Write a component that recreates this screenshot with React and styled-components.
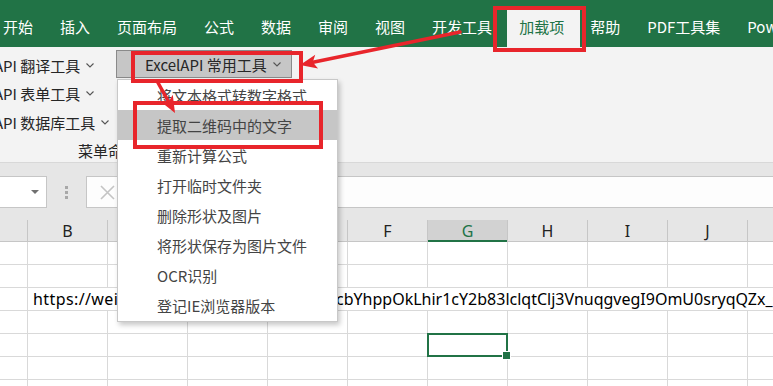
import React from "react";
import styled, { createGlobalStyle } from "styled-components";

const Global = createGlobalStyle`
  html, body { margin: 0; padding: 0; background: #fff; }
  * { box-sizing: border-box; }
`;

const CJK = `"Noto Sans CJK SC", "Noto Sans", sans-serif`;
const LATIN = `"Noto Sans", "Noto Sans CJK SC", sans-serif`;
const GREEN = "#217346";
const RED = "#e8252b";

const Screen = styled.div`
  position: relative;
  width: 773px;
  height: 386px;
  overflow: hidden;
  background: #fff;
  font-family: ${CJK};
`;

const TabBar = styled.div`
  display: flex;
  height: 47px;
  padding-top: 10px;
  margin-left: -10.5px;
  background: ${GREEN};
  white-space: nowrap;
`;

const Tab = styled.div`
  flex: none;
  display: flex;
  align-items: center;
  height: 37px;
  padding: 0 ${(p) => (p.$active ? "16px" : "13.5px")} 5px
    ${(p) => (p.$active ? "12px" : "13.5px")};
  margin-left: ${(p) => (p.$active ? "1.5px" : "0")};
  margin-right: ${(p) => (p.$active ? "-3.5px" : "0")};
  font-size: 15px;
  line-height: 1;
  color: ${(p) => (p.$active ? GREEN : "#fff")};
  background: ${(p) => (p.$active ? "#f3f3f3" : "transparent")};
`;

const Ribbon = styled.div`
  display: flex;
  flex-direction: column;
  height: 116px;
  background: #f3f3f3;
  border-bottom: 1px solid #d4d4d4;
`;

const RibbonRow = styled.div`
  flex: 1;
  display: flex;
`;

const LeftGroup = styled.div`
  width: 116px;
  flex: none;
  display: flex;
  flex-direction: column;
  padding-top: 4px;
`;

const RibbonLabel = styled.div`
  display: flex;
  align-items: center;
  gap: 6px;
  height: 28.5px;
  margin-left: -6px;
  font-size: 15px;
  color: #262626;
  white-space: nowrap;
`;

const ToolGroup = styled.div`
  position: relative;
  padding-top: 3px;
`;

const DropButton = styled.div`
  display: flex;
  align-items: center;
  gap: 6px;
  width: 176px;
  height: 28px;
  padding-left: 28px;
  background: #c6c6c6;
  border: 1px solid #8a8a8a;
  font-size: 15px;
  color: #262626;
  white-space: nowrap;
`;

const Menu = styled.div`
  position: absolute;
  z-index: 10;
  top: 32px;
  left: 1px;
  width: 221px;
  padding-bottom: 1px;
  background: #fff;
  border: 1px solid #c8c8c8;
  box-shadow: 2px 3px 5px rgba(0, 0, 0, 0.22);
`;

const MenuItem = styled.div`
  display: flex;
  align-items: center;
  height: 30px;
  padding-left: 39px;
  font-size: 15px;
  color: #444;
  white-space: nowrap;
  background: ${(p) => (p.$hover ? "#c6c6c6" : "transparent")};
`;

const Caption = styled.div`
  height: 23px;
  line-height: 23px;
  padding-left: 78px;
  font-size: 15px;
  color: #262626;
  white-space: nowrap;
`;

const FormulaArea = styled.div`
  padding: 13px 0 12px;
  background: #e6e6e6;
  border-top: 1px solid #d8d8d8;
  margin-top: -1px;
`;

const FormulaRow = styled.div`
  display: flex;
  height: 32px;
`;

const NameBox = styled.div`
  width: 47px;
  display: flex;
  align-items: center;
  justify-content: flex-end;
  padding-right: 7px;
  background: #fff;
  border: 1px solid #c6c6c6;
  border-left: none;
`;

const Caret = styled.span`
  width: 0;
  height: 0;
  border-left: 4px solid transparent;
  border-right: 4px solid transparent;
  border-top: 4px solid #707070;
`;

const Dots = styled.div`
  width: 39px;
  display: flex;
  flex-direction: column;
  align-items: center;
  justify-content: center;
  gap: 2px;
`;

const Dot = styled.span`
  width: 3px;
  height: 3px;
  background: #a8a8a8;
`;

const FxBox = styled.div`
  flex: 1;
  display: flex;
  align-items: center;
  padding-left: 13px;
  background: #fdfdfd;
  border: 1px solid #c6c6c6;
  border-right: none;
`;

const COLS = "28px repeat(10, 80px)";

const HeaderRow = styled.div`
  display: grid;
  grid-template-columns: ${COLS};
  height: 22px;
  background: #e6e6e6;
  border-bottom: 1px solid #c6c6c6;
`;

const HeaderCell = styled.div`
  display: flex;
  align-items: center;
  justify-content: center;
  border-right: 1px solid #c6c6c6;
  font-family: ${LATIN};
  font-size: 16px;
  line-height: 1;
  color: ${(p) => (p.$sel ? GREEN : "#222")};
  background: ${(p) => (p.$sel ? "#d2d2d2" : "transparent")};
  box-shadow: ${(p) => (p.$sel ? `inset 0 -2px 0 ${GREEN}` : "none")};
  margin-bottom: ${(p) => (p.$sel ? "-1px" : "0")};
`;

const Row = styled.div`
  display: grid;
  grid-template-columns: ${COLS};
  height: 23px;
`;

const Cell = styled.div`
  position: relative;
  border-right: 1px solid #d9d9d9;
  border-bottom: 1px solid #d9d9d9;

  ${(p) =>
    p.$sel &&
    `
    &::after {
      content: "";
      position: absolute;
      z-index: 1;
      top: -1px; left: -1px; right: -1px; bottom: -1px;
      border: 2px solid ${GREEN};
    }
    &::before {
      content: "";
      position: absolute;
      z-index: 2;
      right: -4px; bottom: -4px;
      width: 7px; height: 7px;
      background: ${GREEN};
      border: 1px solid #fff;
    }
  `}
`;

const TextCell = styled.div`
  grid-column: 2 / -1;
  border-bottom: 1px solid #d9d9d9;
  padding-left: 5px;
  overflow: hidden;
  white-space: nowrap;
  font-family: ${LATIN};
  font-size: 16px;
  line-height: 22px;
  color: #000;
`;

const Covered = styled.span`
  display: inline-block;
  width: 303px;
  overflow: hidden;
  vertical-align: top;
  letter-spacing: 0.4px;
`;

const RedBox = styled.div`
  position: absolute;
  z-index: 20;
  left: ${(p) => p.$x}px;
  top: ${(p) => p.$y}px;
  width: ${(p) => p.$w}px;
  height: ${(p) => p.$h}px;
  border: 4px solid ${RED};
  pointer-events: none;
`;

const ArrowLayer = styled.svg`
  position: absolute;
  z-index: 21;
  left: 0;
  top: 0;
  pointer-events: none;
`;

const Chevron = () => (
  <svg width="8" height="5" viewBox="0 0 8 5">
    <polyline points="0.5,0.5 4,4 7.5,0.5" fill="none" stroke="#555" strokeWidth="1.1" />
  </svg>
);

const Arrow = ({ x1, y1, x2, y2 }) => {
  const dx = x2 - x1;
  const dy = y2 - y1;
  const len = Math.hypot(dx, dy);
  const ux = dx / len;
  const uy = dy / len;
  const hl = 17;
  const hw = 7;
  const bx = x2 - ux * hl;
  const by = y2 - uy * hl;
  const pts = `${x2},${y2} ${bx - uy * hw},${by + ux * hw} ${bx + ux * 4},${by + uy * 4} ${bx + uy * hw},${by - ux * hw}`;
  return (
    <g>
      <line x1={x1} y1={y1} x2={bx + ux * 5} y2={by + uy * 5} stroke={RED} strokeWidth="3.5" strokeLinecap="round" />
      <polygon points={pts} fill={RED} />
    </g>
  );
};

const tabs = ["开始", "插入", "页面布局", "公式", "数据", "审阅", "视图", "开发工具", "加载项", "帮助", "PDF工具集", "Power Pivot"];
const menuItems = [
  "将文本格式转数字格式",
  "提取二维码中的文字",
  "重新计算公式",
  "打开临时文件夹",
  "删除形状及图片",
  "将形状保存为图片文件",
  "OCR识别",
  "登记IE浏览器版本",
];
const letters = ["", "B", "C", "D", "E", "F", "G", "H", "I", "J", "K"];

export default function App() {
  return (
    <Screen>
      <Global />
      <TabBar>
        {tabs.map((t) => (
          <Tab key={t} $active={t === "加载项"}>
            {t}
          </Tab>
        ))}
      </TabBar>

      <Ribbon>
        <RibbonRow>
          <LeftGroup>
            <RibbonLabel>
              API 翻译工具 <Chevron />
            </RibbonLabel>
            <RibbonLabel>
              API 表单工具 <Chevron />
            </RibbonLabel>
            <RibbonLabel>
              API 数据库工具 <Chevron />
            </RibbonLabel>
          </LeftGroup>
          <ToolGroup>
            <DropButton>
              ExcelAPI 常用工具 <Chevron />
            </DropButton>
            <Menu>
              {menuItems.map((m, i) => (
                <MenuItem key={m} $hover={i === 1}>
                  {m}
                </MenuItem>
              ))}
            </Menu>
          </ToolGroup>
        </RibbonRow>
        <Caption>菜单命令</Caption>
      </Ribbon>

      <FormulaArea>
        <FormulaRow>
          <NameBox>
            <Caret />
          </NameBox>
          <Dots>
            <Dot />
            <Dot />
            <Dot />
          </Dots>
          <FxBox>
            <svg width="15" height="15" viewBox="0 0 15 15">
              <path d="M1 1 L14 14 M14 1 L1 14" stroke="#c4c4c4" strokeWidth="1.6" />
            </svg>
          </FxBox>
        </FormulaRow>
      </FormulaArea>

      <HeaderRow>
        {letters.map((l, i) => (
          <HeaderCell key={i} $sel={l === "G"}>
            {l}
          </HeaderCell>
        ))}
      </HeaderRow>
      {[0, 1, 2, 3, 4, 5, 6].map((r) =>
        r === 2 ? (
          <Row key={r}>
            <Cell />
            <TextCell>
              <Covered>https://weixin.qq.com/r/mp/zxHjvGaE-Lkz8rNw</Covered>
              cbYhppOkLhir1cY2b83lclqtClj3VnuqgvegI9OmU0sryqQZx_Q8fH2
            </TextCell>
          </Row>
        ) : (
          <Row key={r}>
            {letters.map((l, i) => (
              <Cell key={i} $sel={r === 4 && l === "G"} />
            ))}
          </Row>
        )
      )}

      <RedBox $x={493} $y={6} $w={93} $h={46} />
      <RedBox $x={131} $y={51} $w={172} $h={32} />
      <RedBox $x={133} $y={101} $w={190} $h={48} />
      <ArrowLayer width="773" height="386">
        <Arrow x1={460} y1={32} x2={300} y2={65} />
        <Arrow x1={157} y1={81} x2={175} y2={113} />
      </ArrowLayer>
    </Screen>
  );
}
